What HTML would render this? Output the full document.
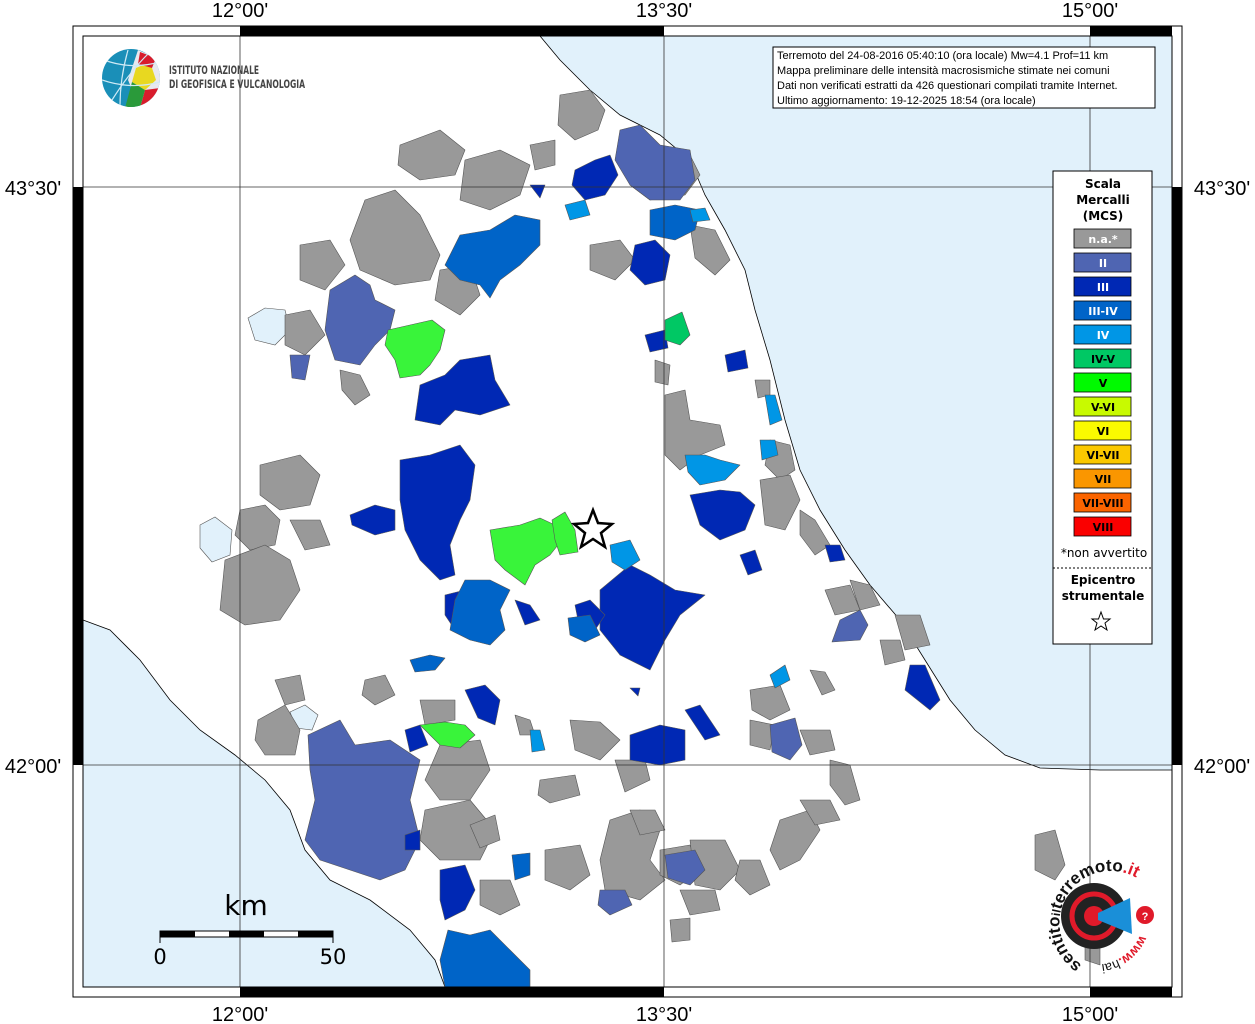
<!DOCTYPE html>
<html><head><meta charset="utf-8"><style>
html,body{margin:0;padding:0;background:#fff;}
svg{display:block;font-family:"Liberation Sans","DejaVu Sans",sans-serif;}
</style></head><body>
<svg width="1255" height="1024" viewBox="0 0 1255 1024" xmlns="http://www.w3.org/2000/svg">
<rect x="0" y="0" width="1255" height="1024" fill="#fff"/>
<rect x="83" y="36" width="1089" height="951" fill="#fff"/>
<path d="M540,36 L560,60 L590,90 L620,115 L660,135 L690,160 L705,195 L725,230 L745,270 L755,310 L770,360 L785,420 L800,470 L820,510 L845,550 L870,585 L900,620 L925,660 L950,700 L975,730 L1005,755 L1040,768 L1100,770 L1172,770 L1172,36 Z" fill="#e1f1fb" stroke="#000" stroke-width="0.8"/>
<path d="M83,620 L110,630 L140,660 L170,700 L200,730 L235,755 L265,780 L290,810 L305,850 L330,880 L370,900 L410,930 L435,960 L445,987 L83,987 Z" fill="#e1f1fb" stroke="#000" stroke-width="0.8"/>
<path d="M248,318 L265,308 L285,310 L290,330 L275,345 L255,340 Z" fill="#e1f1fb" stroke="#555" stroke-width="0.6"/>
<path d="M200,525 L215,517 L232,530 L230,555 L212,562 L200,548 Z" fill="#e1f1fb" stroke="#555" stroke-width="0.6"/>
<path d="M290,712 L305,705 L318,715 L312,730 L296,728 Z" fill="#e1f1fb" stroke="#555" stroke-width="0.6"/>

<g stroke="#555" stroke-width="0.6" stroke-linejoin="round">
<g fill="#999">
<path d="M560,95 L590,90 L605,110 L598,130 L575,140 L558,125 Z"/>
<path d="M400,145 L440,130 L465,150 L455,175 L420,180 L398,165 Z"/>
<path d="M465,160 L500,150 L530,165 L520,195 L490,210 L460,200 Z"/>
<path d="M530,145 L555,140 L555,165 L535,170 Z"/>
<path d="M365,200 L395,190 L420,215 L440,255 L430,280 L395,285 L360,270 L350,240 Z"/>
<path d="M300,245 L330,240 L345,265 L325,290 L300,280 Z"/>
<path d="M440,270 L470,265 L480,295 L460,315 L435,300 Z"/>
<path d="M285,315 L310,310 L325,335 L305,355 L285,345 Z"/>
<path d="M340,370 L360,375 L370,395 L355,405 L342,390 Z"/>
<path d="M590,245 L620,240 L635,260 L615,280 L590,270 Z"/>
<path d="M640,160 L690,155 L700,175 L685,195 L650,200 L630,185 Z"/>
<path d="M690,225 L715,230 L730,260 L715,275 L695,258 Z"/>
<path d="M655,360 L670,365 L668,385 L655,382 Z"/>
<path d="M665,395 L685,390 L690,420 L720,425 L725,445 L700,455 L680,470 L665,455 Z"/>
<path d="M755,380 L770,380 L770,395 L758,398 Z"/>
<path d="M770,440 L790,445 L795,470 L780,480 L765,465 Z"/>
<path d="M760,480 L790,475 L800,500 L785,530 L765,525 Z"/>
<path d="M800,510 L815,520 L830,545 L815,555 L800,535 Z"/>
<path d="M260,465 L300,455 L320,475 L310,505 L280,510 L260,495 Z"/>
<path d="M240,510 L265,505 L280,520 L275,545 L250,550 L235,535 Z"/>
<path d="M225,560 L265,545 L290,560 L300,590 L280,620 L245,625 L220,610 Z"/>
<path d="M290,520 L320,520 L330,545 L305,550 Z"/>
<path d="M275,680 L300,675 L305,700 L285,705 Z"/>
<path d="M365,680 L385,675 L395,695 L375,705 L362,695 Z"/>
<path d="M258,720 L285,705 L300,730 L295,755 L265,755 L255,740 Z"/>
<path d="M420,700 L455,700 L455,720 L425,725 Z"/>
<path d="M440,745 L480,740 L490,770 L470,800 L440,800 L425,780 Z"/>
<path d="M425,810 L470,800 L495,830 L480,860 L440,860 L420,840 Z"/>
<path d="M470,825 L495,815 L500,840 L480,848 Z"/>
<path d="M515,715 L530,720 L535,735 L520,735 Z"/>
<path d="M570,720 L600,722 L620,740 L600,760 L575,750 Z"/>
<path d="M540,780 L575,775 L580,795 L550,803 L538,795 Z"/>
<path d="M545,850 L580,845 L590,875 L570,890 L545,880 Z"/>
<path d="M480,880 L510,880 L520,905 L500,915 L480,905 Z"/>
<path d="M610,820 L640,810 L660,830 L650,860 L665,880 L640,900 L605,890 L600,860 Z"/>
<path d="M660,850 L690,845 L700,870 L680,885 L660,875 Z"/>
<path d="M690,840 L725,840 L740,870 L720,890 L695,885 Z"/>
<path d="M740,860 L760,860 L770,885 L750,895 L735,880 Z"/>
<path d="M680,890 L715,890 L720,910 L690,915 Z"/>
<path d="M670,920 L690,918 L690,940 L672,942 Z"/>
<path d="M630,810 L655,810 L665,830 L640,835 Z"/>
<path d="M780,820 L810,810 L820,830 L800,860 L780,870 L770,850 Z"/>
<path d="M800,800 L830,800 L840,820 L815,825 Z"/>
<path d="M750,690 L780,685 L790,710 L770,720 L752,710 Z"/>
<path d="M750,720 L775,725 L770,750 L750,745 Z"/>
<path d="M800,730 L830,730 L835,750 L810,755 Z"/>
<path d="M810,670 L825,672 L835,690 L822,695 Z"/>
<path d="M880,640 L900,640 L905,660 L885,665 Z"/>
<path d="M895,615 L920,615 L930,645 L905,650 Z"/>
<path d="M825,590 L850,585 L860,610 L835,615 Z"/>
<path d="M850,580 L870,585 L880,605 L860,610 Z"/>
<path d="M620,630 L640,640 L640,660 L620,655 Z"/>
<path d="M615,760 L645,760 L650,780 L625,792 Z"/>
<path d="M830,760 L850,765 L860,800 L845,805 L830,785 Z"/>
<path d="M1035,835 L1055,830 L1065,865 L1055,880 L1035,870 Z"/>
<path d="M1085,930 L1100,935 L1100,965 L1085,960 Z"/>
</g>
<g fill="#4f65b2">
<path d="M330,290 L355,275 L370,285 L375,300 L395,310 L390,330 L375,345 L360,365 L335,360 L325,330 Z"/>
<path d="M290,355 L310,355 L305,380 L292,378 Z"/>
<path d="M620,130 L640,125 L660,145 L690,150 L695,180 L680,200 L650,200 L630,185 L615,160 Z"/>
<path d="M308,735 L340,720 L355,745 L390,740 L420,760 L410,800 L420,840 L405,870 L380,880 L350,870 L320,860 L305,840 L315,800 L310,770 Z"/>
<path d="M665,855 L695,850 L705,870 L690,885 L668,878 Z"/>
<path d="M600,890 L625,890 L632,905 L610,915 L598,905 Z"/>
<path d="M840,620 L860,610 L868,625 L860,640 L832,642 Z"/>
<path d="M770,725 L795,718 L802,745 L790,760 L772,752 Z"/>
</g>
<g fill="#0028b4">
<path d="M575,170 L595,160 L610,155 L618,175 L605,195 L585,200 L572,185 Z"/>
<path d="M530,185 L545,185 L540,198 Z"/>
<path d="M635,245 L655,240 L670,255 L665,280 L645,285 L630,270 Z"/>
<path d="M645,335 L665,330 L668,348 L650,352 Z"/>
<path d="M725,355 L745,350 L748,368 L728,372 Z"/>
<path d="M420,385 L445,375 L460,360 L490,355 L495,380 L510,405 L480,415 L455,410 L440,425 L415,420 Z"/>
<path d="M400,460 L430,455 L460,445 L475,465 L470,500 L460,520 L450,545 L455,575 L440,580 L420,560 L405,530 L400,500 Z"/>
<path d="M350,515 L375,505 L395,510 L395,530 L375,535 L352,525 Z"/>
<path d="M600,590 L630,565 L650,575 L675,590 L705,595 L680,615 L665,640 L650,670 L620,655 L600,630 Z"/>
<path d="M575,605 L590,600 L605,615 L595,630 L578,620 Z"/>
<path d="M445,595 L465,590 L470,620 L455,630 L445,615 Z"/>
<path d="M515,600 L530,605 L540,620 L525,625 Z"/>
<path d="M690,495 L720,490 L740,492 L755,505 L745,530 L720,540 L700,525 Z"/>
<path d="M740,555 L755,550 L762,570 L748,575 Z"/>
<path d="M465,690 L485,685 L500,700 L495,725 L478,718 Z"/>
<path d="M405,730 L420,725 L428,745 L410,752 Z"/>
<path d="M630,735 L660,725 L685,730 L685,760 L660,765 L630,760 Z"/>
<path d="M685,710 L700,705 L720,735 L705,740 Z"/>
<path d="M630,688 L640,688 L638,696 Z"/>
<path d="M440,870 L465,865 L475,890 L465,910 L445,920 L440,900 Z"/>
<path d="M825,545 L840,545 L845,560 L830,562 Z"/>
<path d="M910,665 L925,665 L940,700 L930,710 L905,690 Z"/>
<path d="M405,835 L420,830 L420,850 L405,850 Z"/>
</g>
<g fill="#0064c8">
<path d="M460,235 L490,230 L515,215 L540,220 L540,245 L520,265 L500,280 L490,298 L480,285 L460,280 L445,265 Z"/>
<path d="M650,210 L675,205 L700,210 L695,230 L675,240 L650,235 Z"/>
<path d="M465,580 L490,580 L510,590 L500,610 L505,630 L490,645 L470,640 L450,630 L455,600 Z"/>
<path d="M568,618 L590,615 L600,635 L585,642 L570,635 Z"/>
<path d="M448,930 L470,935 L490,930 L510,950 L530,970 L530,987 L445,987 L440,960 Z"/>
<path d="M410,660 L430,655 L445,658 L435,670 L415,672 Z"/>
<path d="M512,855 L530,853 L530,875 L515,880 Z"/>
</g>
<g fill="#0096e6">
<path d="M565,205 L585,200 L590,215 L570,220 Z"/>
<path d="M690,210 L705,208 L710,220 L693,222 Z"/>
<path d="M685,455 L705,455 L720,460 L740,465 L725,480 L700,485 L688,472 Z"/>
<path d="M760,440 L775,440 L778,455 L762,460 Z"/>
<path d="M765,395 L775,395 L782,420 L770,425 Z"/>
<path d="M610,545 L630,540 L640,560 L625,570 L612,562 Z"/>
<path d="M530,730 L540,730 L545,750 L532,752 Z"/>
<path d="M770,675 L785,665 L790,680 L775,688 Z"/>
</g>
<path d="M665,320 L682,312 L690,335 L680,345 L665,340 Z" fill="#00c864"/>
<g fill="#39f43a">
<path d="M388,330 L410,325 L432,320 L445,330 L440,350 L430,365 L420,375 L400,378 L395,360 L385,345 Z"/>
<path d="M490,530 L520,525 L540,518 L555,525 L558,545 L550,555 L535,565 L525,585 L505,570 L495,560 Z"/>
<path d="M552,520 L565,512 L575,530 L578,552 L560,555 L555,540 Z"/>
<path d="M420,725 L445,722 L465,725 L475,735 L460,748 L440,745 Z"/>
</g>
</g>

<path d="M593,510 L598,523 L612,524 L601,533 L605,547 L593,539 L581,547 L585,533 L574,524 L588,523 Z" fill="#fff" stroke="#000" stroke-width="2.5"/>

<g stroke="#333" stroke-width="0.8" fill="none">
<line x1="240" y1="36" x2="240" y2="987"/>
<line x1="664" y1="36" x2="664" y2="987"/>
<line x1="1090" y1="36" x2="1090" y2="987"/>
<line x1="83" y1="187" x2="1172" y2="187"/>
<line x1="83" y1="765" x2="1172" y2="765"/>
</g>
<rect x="73" y="26" width="1109" height="971" fill="none" stroke="#000" stroke-width="1"/>
<rect x="83" y="36" width="1089" height="951" fill="none" stroke="#000" stroke-width="1"/>
<g fill="#000">
<rect x="240" y="26" width="424" height="10"/>
<rect x="1090" y="26" width="82" height="10"/>
<rect x="240" y="987" width="424" height="10"/>
<rect x="1090" y="987" width="82" height="10"/>
<rect x="73" y="187" width="10" height="578"/>
<rect x="1172" y="187" width="10" height="578"/>
</g>
<g font-size="20" fill="#000" text-anchor="middle">
<text x="240" y="17">12°00'</text>
<text x="664" y="17">13°30'</text>
<text x="1090" y="17">15°00'</text>
<text x="240" y="1021">12°00'</text>
<text x="664" y="1021">13°30'</text>
<text x="1090" y="1021">15°00'</text>
<text x="33" y="195">43°30'</text>
<text x="33" y="773">42°00'</text>
<text x="1222" y="195">43°30'</text>
<text x="1222" y="773">42°00'</text>
</g>

<defs><clipPath id="g"><circle cx="131" cy="78" r="29"/></clipPath></defs>
<g clip-path="url(#g)">
<rect x="100" y="48" width="62" height="60" fill="#1a8fb8"/>
<path d="M138,50 L162,60 L162,108 L140,108 L128,80 Z" fill="#e8e8ee"/>
<path d="M136,68 L150,62 L156,80 L145,90 L132,82 Z" fill="#e8d820"/>
<path d="M145,90 L160,88 L158,104 L140,108 Z" fill="#d81c2c"/>
<path d="M132,82 L145,90 L140,108 L125,108 Z" fill="#2a9a3a"/>
<path d="M140,52 L156,58 L152,68 L138,64 Z" fill="#d81c2c"/>
<path d="M104,60 Q131,70 160,62 M102,80 Q131,90 160,82 M112,100 Q131,70 150,52 M120,106 Q120,78 128,50" stroke="#cfeaf5" stroke-width="1.2" fill="none"/>
</g>
<g font-size="11.5" font-weight="bold" fill="#444" font-family="'DejaVu Sans Condensed','Liberation Sans Narrow','Liberation Sans',sans-serif">
<text x="169" y="74" textLength="90" lengthAdjust="spacingAndGlyphs">ISTITUTO NAZIONALE</text>
<text x="169" y="88" textLength="136" lengthAdjust="spacingAndGlyphs">DI GEOFISICA E VULCANOLOGIA</text>
</g>

<rect x="773" y="47" width="382" height="61" fill="#fff" stroke="#000" stroke-width="1"/>
<g font-size="11" fill="#000">
<text x="777" y="59">Terremoto del 24-08-2016 05:40:10 (ora locale) Mw=4.1 Prof=11 km</text>
<text x="777" y="74">Mappa preliminare delle intensità macrosismiche stimate nei comuni</text>
<text x="777" y="89">Dati non verificati estratti da 426 questionari compilati tramite Internet.</text>
<text x="777" y="104">Ultimo aggiornamento: 19-12-2025 18:54 (ora locale)</text>
</g>

<rect x="1053" y="171" width="99" height="473" fill="#fff" stroke="#000" stroke-width="1"/>
<g font-size="12" font-weight="bold" text-anchor="middle" fill="#000" font-family="'DejaVu Sans',sans-serif">
<text x="1103" y="188">Scala</text>
<text x="1103" y="204">Mercalli</text>
<text x="1103" y="220">(MCS)</text>
</g>
<g stroke="#000" stroke-width="0.8">
<rect x="1074" y="229" width="57" height="19" fill="#999"/>
<rect x="1074" y="253" width="57" height="19" fill="#4f65b2"/>
<rect x="1074" y="277" width="57" height="19" fill="#0028b4"/>
<rect x="1074" y="301" width="57" height="19" fill="#0064c8"/>
<rect x="1074" y="325" width="57" height="19" fill="#0096e6"/>
<rect x="1074" y="349" width="57" height="19" fill="#00c864"/>
<rect x="1074" y="373" width="57" height="19" fill="#00fa00"/>
<rect x="1074" y="397" width="57" height="19" fill="#c8fa00"/>
<rect x="1074" y="421" width="57" height="19" fill="#fafa00"/>
<rect x="1074" y="445" width="57" height="19" fill="#fac800"/>
<rect x="1074" y="469" width="57" height="19" fill="#fa9600"/>
<rect x="1074" y="493" width="57" height="19" fill="#fa6400"/>
<rect x="1074" y="517" width="57" height="19" fill="#fa0000"/>
</g>
<g font-size="11" font-weight="bold" text-anchor="middle" font-family="'DejaVu Sans',sans-serif">
<text x="1103" y="243" fill="#fff">n.a.*</text>
<text x="1103" y="267" fill="#fff">II</text>
<text x="1103" y="291" fill="#fff">III</text>
<text x="1103" y="315" fill="#fff">III-IV</text>
<text x="1103" y="339" fill="#fff">IV</text>
<text x="1103" y="363" fill="#000">IV-V</text>
<text x="1103" y="387" fill="#000">V</text>
<text x="1103" y="411" fill="#000">V-VI</text>
<text x="1103" y="435" fill="#000">VI</text>
<text x="1103" y="459" fill="#000">VI-VII</text>
<text x="1103" y="483" fill="#000">VII</text>
<text x="1103" y="507" fill="#000">VII-VIII</text>
<text x="1103" y="531" fill="#000">VIII</text>
</g>
<text x="1104" y="557" font-size="12" text-anchor="middle" font-family="'DejaVu Sans',sans-serif">*non avvertito</text>
<line x1="1053" y1="568" x2="1152" y2="568" stroke="#000" stroke-dasharray="2,2"/>
<g font-size="12" font-weight="bold" text-anchor="middle" font-family="'DejaVu Sans',sans-serif">
<text x="1103" y="584">Epicentro</text>
<text x="1103" y="600">strumentale</text>
</g>
<path d="M1101,612 L1103.5,619 L1110,619 L1105,623 L1107,630 L1101,626 L1095,630 L1097,623 L1092,619 L1098.5,619 Z" fill="#fff" stroke="#000" stroke-width="1"/>

<text x="246" y="915" font-size="28" text-anchor="middle" font-family="'DejaVu Sans',sans-serif">km</text>
<rect x="160" y="931" width="173" height="6" fill="#fff" stroke="#000" stroke-width="1"/>
<rect x="160" y="931" width="35" height="6" fill="#000"/>
<rect x="229" y="931" width="35" height="6" fill="#000"/>
<rect x="298" y="931" width="35" height="6" fill="#000"/>
<line x1="160" y1="931" x2="160" y2="943" stroke="#000"/>
<line x1="333" y1="931" x2="333" y2="943" stroke="#000"/>
<text x="160" y="964" font-size="21" text-anchor="middle" font-family="'DejaVu Sans',sans-serif">0</text>
<text x="333" y="964" font-size="21" text-anchor="middle" font-family="'DejaVu Sans',sans-serif">50</text>

<circle cx="1094" cy="916" r="33" fill="#222"/>
<circle cx="1094" cy="916" r="22" fill="none" stroke="#e01a2a" stroke-width="5"/>
<circle cx="1094" cy="916" r="10" fill="#e01a2a"/>
<path d="M1098,913 L1130,898 L1132,934 L1098,920 Z" fill="#1a8fd8"/>
<circle cx="1145" cy="915" r="9" fill="#e01a2a"/>
<text x="1145" y="920" font-size="11" fill="#fff" text-anchor="middle" font-weight="bold">?</text>
<defs><path id="arc" d="M1082,965 A50,50 0 1 1 1140,880"/></defs>
<text font-size="17" font-weight="bold" fill="#111"><textPath href="#arc">sentito<tspan font-size="12">il</tspan>terremoto<tspan fill="#e01a2a">.it</tspan></textPath></text>
<defs><path id="arc2" d="M1140,935 A48,48 0 0 1 1080,962"/></defs>
<text font-size="13" font-weight="bold" fill="#e01a2a"><textPath href="#arc2">www.<tspan fill="#111" font-weight="normal">hai</tspan></textPath></text>
</svg>
</body></html>
